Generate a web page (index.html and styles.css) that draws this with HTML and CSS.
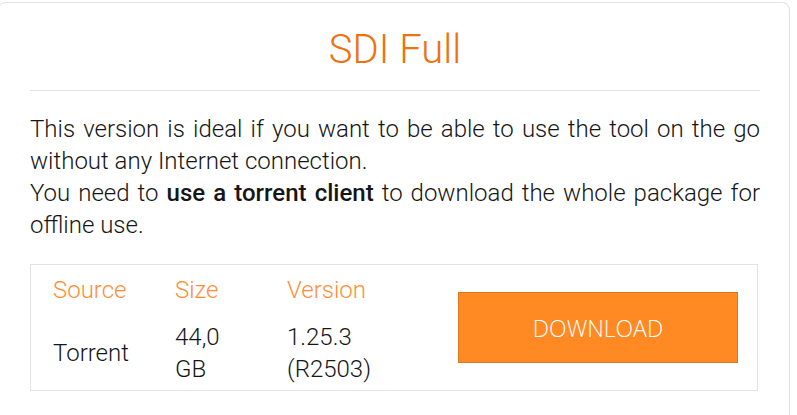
FILE: index.html
```html
<!DOCTYPE html>
<html lang="en">
<head>
<meta charset="utf-8">
<title>SDI Full</title>
<link rel="stylesheet" href="styles.css">
</head>
<body>
<div class="card">
  <h2 class="title">SDI Full</h2>
  <hr class="sep">
  <p class="desc">This version is ideal if you want to be able to use the tool on the go without any Internet connection.<br>You need to <strong>use a torrent client</strong> to download the whole package for offline use.</p>
  <div class="dl-box">
    <div class="info">
      <div class="th">Source</div>
      <div class="th">Size</div>
      <div class="th">Version</div>
      <div class="td">Torrent</div>
      <div class="td">44,0 GB</div>
      <div class="td">1.25.3 (R2503)</div>
    </div>
    <a class="btn" href="#">DOWNLOAD</a>
  </div>
</div>
</body>
</html>
```

FILE: styles.css
```css
html, body {
  margin: 0;
  padding: 0;
  background: #fff;
  overflow: hidden;
}
body {
  font-family: Roboto, "Liberation Sans", sans-serif;
  font-weight: 300;
  color: #161616;
}
.card {
  margin: 2px 0 0 -2px;
  width: 792px;
  box-sizing: border-box;
  height: 430px;
  border: 1px solid #e2e2e2;
  border-radius: 8px;
  padding: 23px 29px 0 31px;
}
.title {
  margin: 0;
  text-align: center;
  font-weight: 300;
  font-size: 40px;
  line-height: 48px;
  color: #ee720f;
}
.sep {
  margin: 16px 0 0;
  border: 0;
  border-top: 1px solid #e2e2e2;
  height: 0;
}
.desc {
  margin: 22px 0 0;
  font-size: 24px;
  line-height: 32px;
  text-align: justify;
}
.desc strong {
  font-weight: 500;
}
.dl-box {
  margin-top: 23px;
  width: 728px;
  height: 127px;
  box-sizing: border-box;
  border: 1px solid #e3e3e3;
  display: flex;
  align-items: center;
}
.info {
  display: grid;
  grid-template-columns: 122px 112px 130px;
  row-gap: 15px;
  padding: 4px 0 0 22px;
  align-items: center;
  font-size: 24px;
  line-height: 32px;
}
.th, .td {
  padding-right: 40px;
}
.th {
  color: #ff8f35;
}
.btn {
  margin-left: auto;
  margin-right: 19px;
  width: 280px;
  height: 71px;
  box-sizing: border-box;
  background: #ff8a24;
  border: 1px solid #dc781d;
  color: #fff;
  text-decoration: none;
  font-family: "Open Sans", "Liberation Sans", sans-serif;
  font-weight: 300;
  font-size: 23px;
  display: flex;
  align-items: center;
  justify-content: center;
}
```
